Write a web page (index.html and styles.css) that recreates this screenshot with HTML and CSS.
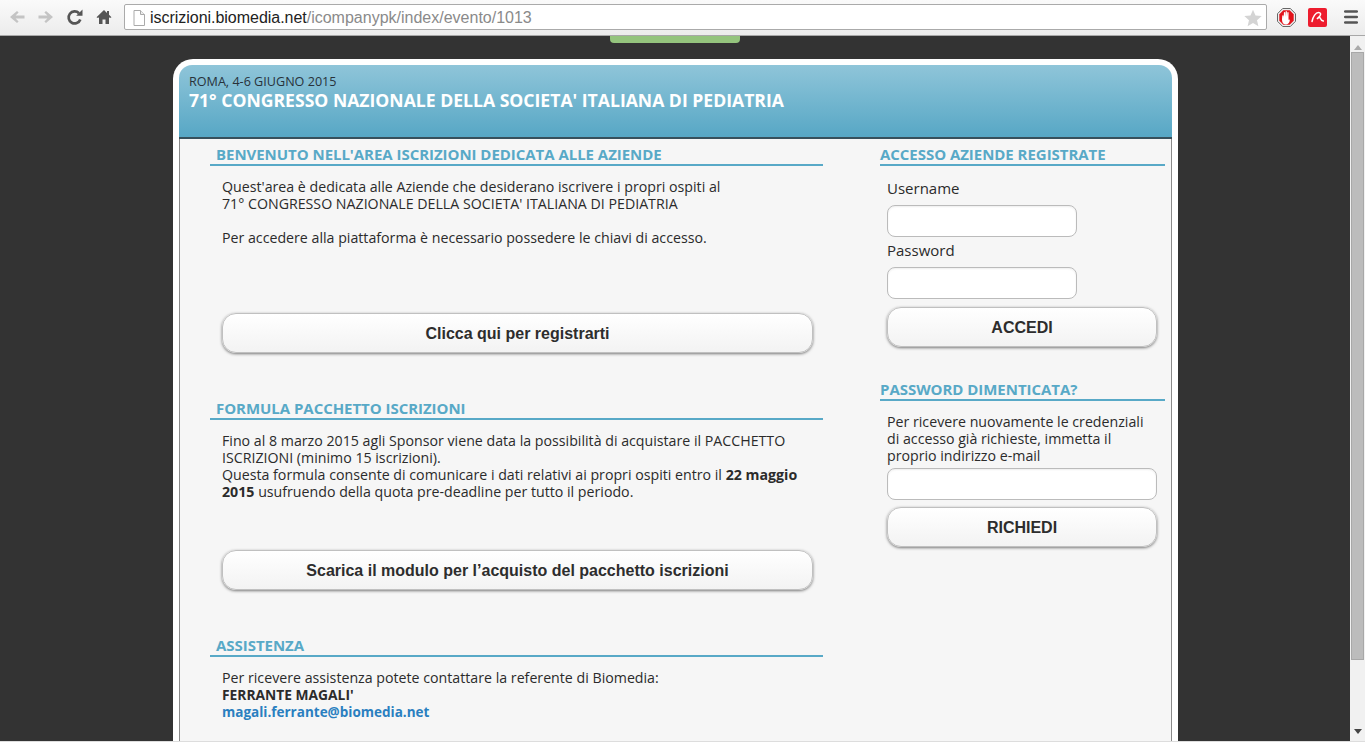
FILE: index.html
```html
<!DOCTYPE html>
<html lang="it">
<head>
<meta charset="utf-8">
<title>Iscrizioni Biomedia</title>
<link rel="stylesheet" href="styles.css">
</head>
<body>
<div class="toolbar">
  <div class="nav">
    <svg class="ico" width="18" height="18" viewBox="0 0 18 18"><path d="M16.500 7.400H7.600l3-3L9 3 2 9l7 6 1.600-1.400-3-3h8.900z" fill="#c4c4c4"/></svg>
    <svg class="ico" width="18" height="18" viewBox="0 0 18 18"><path d="M1.500 7.400h8.900l-3-3L9 3l7 6-7 6-1.600-1.400 3-3H1.500z" fill="#c4c4c4"/></svg>
    <svg class="ico" width="18" height="18" viewBox="0 0 18 18"><path d="M14.300 11.500A6 6 0 1 1 13 5.300" fill="none" stroke="#555" stroke-width="2.700"/><path d="M10.200 7.800H16.500V1.500z" fill="#555"/></svg>
    <svg class="ico" width="18" height="18" viewBox="0 0 18 18"><path d="M9 2 1.500 9.200 3 10l1-.8V16h3.500v-4.500h3V16H14V9.200l1 .8 1.500-.8L14 6.800V3h-2v1.900z" fill="#555"/></svg>
  </div>
  <div class="omnibox">
    <svg class="page" width="12" height="16" viewBox="0 0 12 16"><path d="M1 .5h6.500l4 4v11H1z" fill="#fff" stroke="#aaa"/><path d="M7.500.5v4h4" fill="#eee" stroke="#aaa"/></svg>
    <span class="host">iscrizioni.biomedia.net</span><span class="path">/icompanypk/index/evento/1013</span>
    <svg class="star" width="18" height="18" viewBox="0 0 18 18"><path d="M9 .8l2.500 5.700 6.200.6-4.700 4.100 1.400 6L9 14.100l-5.400 3.100 1.400-6L.3 7.100l6.200-.6z" fill="#d4d4d4"/></svg>
  </div>
  <div class="exts">
    <svg class="ext-stop" width="19" height="19" viewBox="0 0 19 19"><path d="M5.700.5h7.600l5.200 5.200v7.600l-5.200 5.200H5.700L.5 13.300V5.700z" fill="#eee" stroke="#666"/><path d="M6.300 2.300h6.400l4 4v6.400l-4 4H6.300l-4-4V6.300z" fill="#e3131b"/><path d="M5.300 7.800c0-.9 1.200-.9 1.300 0l.1 2 .2-5c0-1 1.300-1 1.300 0l.2 4 .2-5c0-1 1.300-1 1.300 0l.1 5 .3-4c.1-1 1.300-.9 1.300 0l-.1 5 .1 2.300c0-1 1.300-.9 1.200 0-.2 2.300-1.300 4.400-3.700 4.400-3.400 0-4.100-2.700-4.100-5.400z" fill="#fff"/></svg>
    <svg class="ext-avira" width="19" height="19" viewBox="0 0 19 19"><rect width="19" height="19" rx="2" fill="#ed1c2e"/><path d="M4 13.500C5 8.500 7.700 4.500 10.500 4.500c2.200 0 2.700 1.700 1.400 3.500L9 11c1.200-1.500 2.800-2.200 3.300-.8.400 1.200 1.200 2.300 3 2.800" fill="none" stroke="#fff" stroke-width="1.500" stroke-linecap="round"/></svg>
    <svg class="ext-menu" width="14" height="14" viewBox="0 0 14 14"><path d="M1.200 1.500h11.600M1.200 7h11.600M1.200 12.500h11.600" stroke="#555" stroke-width="2.600" stroke-linecap="round"/></svg>
  </div>
</div>

<div class="viewport">
  <div class="canvas">
    <div class="tab"></div>
    <div class="card">
      <header class="head">
        <div class="head-date">ROMA, 4-6 GIUGNO 2015</div>
        <h1 class="head-title">71° CONGRESSO NAZIONALE DELLA SOCIETA' ITALIANA DI PEDIATRIA</h1>
      </header>
      <main class="content">
        <div class="col-left">
          <section class="sec sec-welcome">
            <h2 class="sec-title">BENVENUTO NELL'AREA ISCRIZIONI DEDICATA ALLE AZIENDE</h2>
            <p class="txt">Quest'area è dedicata alle Aziende che desiderano iscrivere i propri ospiti al<br>71° CONGRESSO NAZIONALE DELLA SOCIETA' ITALIANA DI PEDIATRIA<br><br>Per accedere alla piattaforma è necessario possedere le chiavi di accesso.</p>
            <a class="btn btn-wide">Clicca qui per registrarti</a>
          </section>
          <section class="sec sec-formula">
            <h2 class="sec-title">FORMULA PACCHETTO ISCRIZIONI</h2>
            <p class="txt">Fino al 8 marzo 2015 agli Sponsor viene data la possibilità di acquistare il PACCHETTO ISCRIZIONI (minimo 15 iscrizioni).<br>Questa formula consente di comunicare i dati relativi ai propri ospiti entro il <b>22 maggio 2015</b> usufruendo della quota pre-deadline per tutto il periodo.</p>
            <a class="btn btn-wide">Scarica il modulo per l’acquisto del pacchetto iscrizioni</a>
          </section>
          <section class="sec">
            <h2 class="sec-title">ASSISTENZA</h2>
            <p class="txt">Per ricevere assistenza potete contattare la referente di Biomedia:<br><b class="name">FERRANTE MAGALI'</b><br><a class="mail">magali.ferrante@biomedia.net</a></p>
          </section>
        </div>
        <aside class="col-right">
          <section class="login">
            <h2 class="sec-title">ACCESSO AZIENDE REGISTRATE</h2>
            <form class="form">
              <label class="lbl lbl-first">Username</label>
              <input class="field field-short" type="text">
              <label class="lbl">Password</label>
              <input class="field field-short" type="password">
              <a class="btn btn-side">ACCEDI</a>
            </form>
          </section>
          <section class="forgot">
            <h2 class="sec-title">PASSWORD DIMENTICATA?</h2>
            <form class="form">
              <p class="txt-side">Per ricevere nuovamente le credenziali di accesso già richieste, immetta il proprio indirizzo e-mail</p>
              <input class="field" type="text">
              <a class="btn btn-side">RICHIEDI</a>
            </form>
          </section>
        </aside>
      </main>
    </div>
  </div>
  <div class="scrollbar">
    <span class="arrow-up"></span>
    <div class="thumb"></div>
    <span class="arrow-down"></span>
  </div>
</div>
</body>
</html>
```

FILE: styles.css
```css
* { box-sizing: border-box; }
html, body { margin: 0; height: 100%; overflow: hidden; }
body {
  display: flex;
  flex-direction: column;
  height: 742px;
  font-family: "Open Sans", "DejaVu Sans", sans-serif;
  color: #2b2b2b;
  background: #333;
}
.toolbar {
  flex: 0 0 36px;
  display: flex;
  align-items: center;
  background: linear-gradient(#fafafa, #ececec);
  border-bottom: 1px solid #a8a8a8;
  padding: 0 0 1px 8px;
}
.nav { display: flex; gap: 11px; width: 116px; align-items: center; }
.ico { display: block; }
.omnibox {
  flex: 0 0 1143px;
  height: 26px;
  display: flex;
  align-items: center;
  padding: 1px 4px 0 8px;
  background: #fff;
  border: 1px solid #aaa;
  border-radius: 2px;
  font: 16px "Liberation Sans", sans-serif;
}
.page { margin-right: 5px; }
.host { color: #222; letter-spacing: -0.03px; }
.path { color: #8a8a8a; }
.star { margin-left: auto; }
.exts { display: flex; align-items: center; padding-left: 10px; }
.ext-avira { margin-left: 12px; }
.ext-menu { margin-left: 17px; }
.viewport { flex: 1; display: flex; min-height: 0; border-bottom: 1px solid #ddd; }
.canvas { flex: 1; display: flex; flex-direction: column; align-items: center; overflow: hidden; background: #333; }
.tab {
  flex: 0 0 7px;
  width: 130px;
  background: #94c47d;
  border-radius: 0 0 4px 4px;
}
.card {
  width: 1005px;
  flex: 1 0 auto;
  margin: 16px 0 0 1px;
  background: #fff;
  border: solid #fff;
  border-width: 6px 6px 0;
  border-radius: 20px 20px 0 0;
}
.head {
  height: 74px;
  padding: 10px 10px 0;
  background: linear-gradient(#8fc5d9, #57a7c5);
  border-bottom: 2px solid #37505c;
  border-radius: 13px 13px 0 0;
}
.head-date { font-size: 12.6px; line-height: 14px; color: #28323a; }
.head-title { margin: 0; font-size: 17.6px; line-height: 22px; font-weight: 700; color: #fff; }
.content {
  display: flex;
  min-height: 620px;
  background: #f6f6f6;
  border: solid #8a8a8a;
  border-width: 0 1px;
  padding: 7px 6px 0 30px;
}
.col-left { width: 613px; }
.col-right { width: 285px; margin-left: 57px; }
.sec-title {
  margin: 0;
  padding: 0 0 1px 6px;
  height: 20px;
  font-size: 15px;
  letter-spacing: -0.04px;
  line-height: 16px;
  font-weight: 700;
  color: #58a9c7;
  border-bottom: 2px solid #58a9c7;
}
.col-right .sec-title { padding-left: 0; }
.txt { margin: 0; padding: 13.4px 10px 0 12px; font-size: 14.2px; line-height: 16.7px; }
.name { font-size: 13.8px; }
.mail { color: #2a7fc0; font-weight: 700; font-size: 13.5px; }
.btn {
  display: block;
  height: 40px;
  font: 700 16px/40px "Liberation Sans", sans-serif;
  color: #2d2d2d;
  text-align: center;
  background: linear-gradient(#fff, #f3f3f3);
  border: 1px solid #c0c0c0;
  border-radius: 14px;
  box-shadow: 0 1px 3px #777;
}
.btn-wide { margin: 66.8px 10px 0 12px; }
.sec-welcome { height: 254px; }
.sec-formula { height: 237px; }
.sec-formula .btn-wide { margin-top: 49.8px; }
.form { display: flex; flex-direction: column; align-items: flex-start; padding: 0 8px 0 7px; }
.lbl { font-size: 15px; line-height: 20px; margin: 3px 0 7px; }
.lbl-first { margin-top: 12px; }
.field {
  display: block;
  width: 100%;
  height: 32px;
  padding: 0;
  background: #fff;
  border: 1px solid #bbb;
  border-radius: 8px;
  box-shadow: inset 0 1px 2px #eee;
}
.field-short { width: 190px; }
.btn-side { width: 100%; margin-top: 8px; }
.forgot { margin-top: 34px; }
.forgot .btn-side { margin-top: 7px; }
.txt-side { margin: 0 0 4px; padding: 12px 12px 0 0; font-size: 14.2px; line-height: 17px; }
.scrollbar {
  flex: 0 0 15px;
  background: #f1f1f1;
  position: relative;
  display: flex;
  flex-direction: column;
  align-items: center;
  padding-top: 9px;
}
.arrow-up { border: 4px solid transparent; border-top: 0; border-bottom: 5px solid #aaa; }
.thumb { width: 13px; height: 608px; margin-top: 2px; background: #bcbcbc; border: 1px solid #a8a8a8; }
.arrow-down { position: absolute; bottom: 7px; border: 4px solid transparent; border-bottom: 0; border-top: 5px solid #444; }
```
